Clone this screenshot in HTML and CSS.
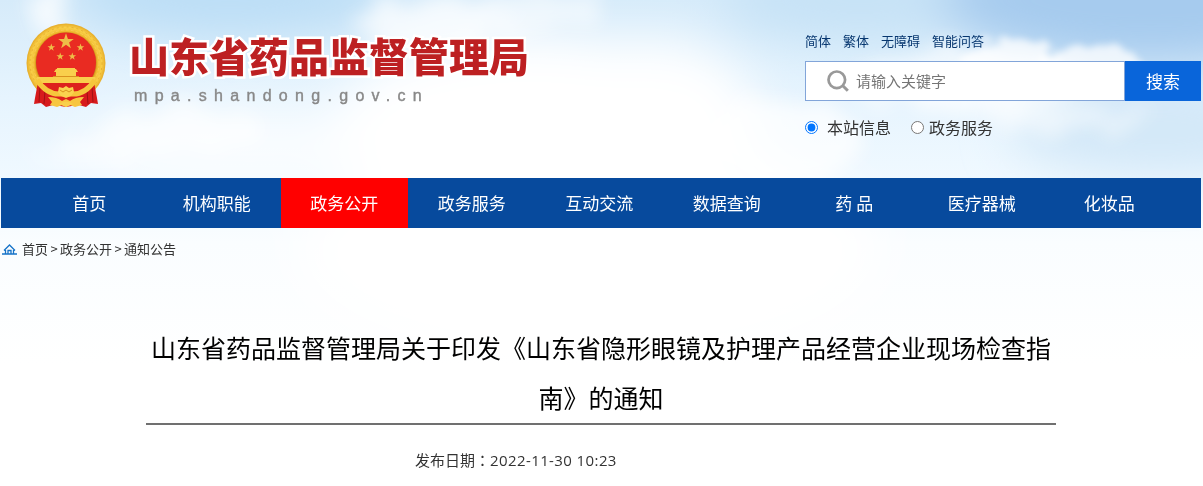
FILE: index.html
```html
<!DOCTYPE html>
<html lang="zh-CN">
<head>
    <meta charset="utf-8">
    <title>山东省药品监督管理局</title>
    <link rel="stylesheet" href="styles.css">
</head>
<body>
    <svg class="sky" width="1203" height="486" viewBox="0 0 1203 486" aria-hidden="true">
        <defs>
            <linearGradient id="base" x1="0" y1="0" x2="0" y2="1">
                <stop offset="0" stop-color="#d6ebfa" />
                <stop offset=".2" stop-color="#e6f4fe" />
                <stop offset=".37" stop-color="#f0f9ff" />
                <stop offset=".5" stop-color="#fafdff" />
                <stop offset=".75" stop-color="#ffffff" />
            </linearGradient>
            <filter id="soft" x="-50%" y="-50%" width="200%" height="200%">
                <feGaussianBlur stdDeviation="24" />
            </filter>
            <filter id="cloud" x="-30%" y="-60%" width="160%" height="220%">
                <feTurbulence type="fractalNoise" baseFrequency=".03 .045" numOctaves="5" seed="7" result="n" />
                <feDisplacementMap in="SourceGraphic" in2="n" scale="50" xChannelSelector="R" yChannelSelector="G" />
                <feGaussianBlur stdDeviation="9" />
            </filter>
            <filter id="edge" x="-30%" y="-60%" width="160%" height="220%">
                <feTurbulence type="fractalNoise" baseFrequency=".05" numOctaves="4" seed="3" result="n" />
                <feDisplacementMap in="SourceGraphic" in2="n" scale="24" xChannelSelector="R" yChannelSelector="G" />
                <feGaussianBlur stdDeviation="3.5" />
            </filter>
        </defs>
        <rect width="1203" height="486" fill="url(#base)" />
        <g filter="url(#soft)">
            <ellipse cx="230" cy="-5" rx="160" ry="42" fill="#bcdef6" />
            <ellipse cx="860" cy="0" rx="140" ry="40" fill="#c6e2f6" />
            <ellipse cx="1150" cy="0" rx="210" ry="65" fill="#a6cbee" />
            <ellipse cx="1160" cy="130" rx="150" ry="45" fill="#d3e8f8" />
            <ellipse cx="530" cy="130" rx="200" ry="95" fill="#fff" />
            <ellipse cx="650" cy="130" rx="110" ry="90" fill="#fff" />
            <ellipse cx="590" cy="250" rx="290" ry="110" fill="#fff" />
            <ellipse cx="250" cy="150" rx="170" ry="40" fill="#fff" opacity=".7" />
        </g>
        <g filter="url(#cloud)" fill="#fff">
            <ellipse cx="50" cy="8" rx="20" ry="26" opacity=".75" />
            <ellipse cx="430" cy="26" rx="70" ry="26" opacity=".7" />
            <ellipse cx="540" cy="10" rx="70" ry="22" opacity=".5" />
            <ellipse cx="180" cy="130" rx="80" ry="22" opacity=".6" />
            <ellipse cx="90" cy="152" rx="60" ry="14" opacity=".5" />
            <ellipse cx="970" cy="82" rx="110" ry="30" opacity=".7" />
            <ellipse cx="780" cy="140" rx="80" ry="45" opacity=".7" />
            <ellipse cx="1060" cy="118" rx="90" ry="12" opacity=".5" />
        </g>
        <g filter="url(#edge)" fill="#fff">
            <ellipse cx="1010" cy="62" rx="50" ry="24" opacity=".75" />
            <ellipse cx="1088" cy="66" rx="52" ry="20" opacity=".75" />
        </g>
    </svg>

    <div class="page">
        <div class="header">
            <div class="logo">
                <svg class="emblem" width="82" height="88" viewBox="0 0 82 88" aria-hidden="true">
                    <defs>
                        <radialGradient id="gold">
                            <stop offset=".74" stop-color="#bd7d12" />
                            <stop offset=".8" stop-color="#f0b92e" />
                            <stop offset=".9" stop-color="#f9cf48" />
                            <stop offset="1" stop-color="#e5aa26" />
                        </radialGradient>
                        <polygon id="star" points="0,-10 2.35,-3.2 9.5,-3.1 3.8,1.2 5.9,8.1 0,4 -5.9,8.1 -3.8,1.2 -9.5,-3.1 -2.35,-3.2" />
                    </defs>
                    <circle cx="41" cy="42" r="39.5" fill="url(#gold)" />
                    <circle cx="41" cy="42" r="36" fill="none" stroke="#d99a20" stroke-dasharray="2 3" opacity=".5" />
                    <circle cx="41" cy="42" r="33" fill="none" stroke="#fde07a" stroke-dasharray="3 2" opacity=".4" />
                    <circle cx="41" cy="41.500" r="30" fill="#e92b22" />
                    <g fill="#eebd48">
                        <use href="#star" transform="translate(41 20.5) scale(.82)" />
                        <use href="#star" transform="translate(26.3 26.5) scale(.4)" />
                        <use href="#star" transform="translate(55.5 26.5) scale(.4)" />
                        <use href="#star" transform="translate(35.2 35.5) scale(.4)" />
                        <use href="#star" transform="translate(47.3 35.5) scale(.4)" />
                    </g>
                    <path d="M31 48h1v-1h18v1h1l2 3h-2v4H31v-4h-2zM28 55h26v1h16v6H12v-6h16z" fill="#f9cf4c" />
                    <path d="M28 55.500h26" stroke="#d9921f" />
                    <path d="M13 62h56l-6 20-22 4-22-4z" fill="#dd201d" />
                    <path d="M13 61l-3 16-1 6 7-1 5 4 7-2-1-10zM69 61l3 16 1 6-7-1-5 4-7-2 1-10z" fill="#d71a1c" />
                    <path d="M15 66l-1 15M20 70l-1 13M67 66l1 15M62 70l1 13" stroke="#a01012" />
                    <path d="M12 59Q24 77 41 72Q58 77 70 59" fill="none" stroke="#f6c63c" stroke-width="5" />
                    <path d="M34 66l4 1 3-2 3 2 4-1 1 5-3 4-5 2-5-2-3-4z" fill="#fad24e" />
                    <path d="M35 69l3 2 3-2 3 2 3-2" fill="none" stroke="#d9921f" />
                    <path d="M23 76q9 0 14 4l4-2 4 2q5-4 14-4l-4 5 2 3-7 2-5-2-4 2-4-2-5 2-7-2 2-3z" fill="#f7c640" />
                    <path d="M34 83q7-5 14 0l-7 3z" fill="#f9d04c" />
                </svg>
                <div class="logo-text">
                    <div class="site-name">山东省药品监督管理局</div>
                    <div class="site-url">mpa.shandong.gov.cn</div>
                </div>
            </div>

            <div class="tools">
                <div class="links">
                    <a href="#">简体</a>
                    <a href="#">繁体</a>
                    <a href="#">无障碍</a>
                    <a href="#">智能问答</a>
                </div>
                <form class="search" action="#">
                    <label class="search-box">
                        <svg width="22" height="22" viewBox="0 0 22 22" aria-hidden="true">
                            <circle cx="9.800" cy="9.800" r="8.300" fill="none" stroke="#999" stroke-width="2.700" />
                            <path d="M15.800 15.800l5 5" stroke="#999" stroke-width="3" />
                        </svg>
                        <input type="text" class="keyword" placeholder="请输入关键字">
                    </label>
                    <button type="button" class="search-btn">搜索</button>
                </form>
                <div class="scope">
                    <label class="scope-site"><input type="radio" name="scope" checked><span>本站信息</span></label>
                    <label class="scope-gov"><input type="radio" name="scope"><span>政务服务</span></label>
                </div>
            </div>
        </div>

        <div class="nav">
            <a href="#">首页</a>
            <a href="#">机构职能</a>
            <a href="#" class="on">政务公开</a>
            <a href="#">政务服务</a>
            <a href="#">互动交流</a>
            <a href="#">数据查询</a>
            <a href="#">药 品</a>
            <a href="#">医疗器械</a>
            <a href="#">化妆品</a>
        </div>

        <div class="crumb">
            <svg width="15" height="11" viewBox="0 0 15 11" aria-hidden="true">
                <path d="M2 6.500L7.500 1L13 6.500M3.500 6v4M11.500 6v4M0 10h15M6 10V6.500h3V10" fill="none" stroke="#1673c8" stroke-width="1.300" />
            </svg>
            <a href="#">首页</a><span>&gt;</span><a href="#">政务公开</a><span>&gt;</span><a href="#">通知公告</a>
        </div>

        <div class="article">
            <h1>山东省药品监督管理局关于印发《山东省隐形眼镜及护理产品经营企业现场检查指南》的通知</h1>
            <p class="date">发布日期<span class="colon" lang="zh-TW">：</span><span class="time">2022-11-30 10:23</span></p>
        </div>
    </div>
</body>
</html>
```
FILE: styles.css
```css
* {
    box-sizing: border-box;
}

body {
    margin: 0;
    height: 486px;
    overflow: hidden;
    background: #fff;
    color: #333;
    font-family: "Microsoft YaHei", "Noto Sans CJK SC", sans-serif;
}

a {
    color: inherit;
    text-decoration: none;
}

.sky {
    position: absolute;
    top: 0;
    left: 0;
    z-index: -1;
}

.page {
    width: 1200px;
    margin-left: 1px;
}

/* header */
.header {
    display: flex;
    justify-content: space-between;
    height: 178px;
}

.logo {
    display: flex;
    padding: 21px 0 0 24px;
}

.logo-text {
    padding: 6px 0 0 22px;
}

.site-name {
    height: 58px;
    line-height: 56px;
    font-size: 40px;
    font-weight: 900;
    color: #bd2022;
    white-space: nowrap;
    paint-order: stroke fill;
    -webkit-text-stroke: 5px #fff;
}

.site-url {
    padding-left: 5px;
    line-height: 22px;
    font-family: "Liberation Sans", Arial, sans-serif;
    font-size: 16px;
    letter-spacing: 7.3px;
    color: #888;
    -webkit-text-stroke: .4px #888;
}

.tools {
    width: 396px;
    padding-top: 31px;
}

.links {
    display: flex;
    gap: 12px;
    height: 30px;
    line-height: 20px;
    font-size: 13px;
    color: #06366f;
}

.search {
    display: flex;
    height: 40px;
}

.search-box {
    display: flex;
    align-items: center;
    width: 320px;
    padding-left: 21px;
    border: 1px solid #82a5d9;
    background: #fff;
}

.keyword {
    width: 250px;
    padding: 0 0 2px 7px;
    border: 0;
    outline: 0;
    background: none;
    font: 15px "Microsoft YaHei", "Noto Sans CJK SC", sans-serif;
}

.keyword::placeholder {
    color: #757575;
}

.search-btn {
    width: 76px;
    padding: 0 0 2px;
    border: 0;
    background: #0965da;
    color: #fff;
    font: 17px "Microsoft YaHei", "Noto Sans CJK SC", sans-serif;
}

.scope {
    display: flex;
    gap: 20px;
    padding-top: 14px;
    line-height: 24px;
    font-size: 16px;
}

.scope label {
    display: flex;
    align-items: center;
}

.scope input {
    width: 13px;
    height: 13px;
    margin: 1px 9px 0 0;
}

.scope .scope-gov input {
    margin-right: 5px;
}

/* nav */
.nav {
    display: flex;
    height: 50px;
    padding-left: 24.5px;
    background: #074a9d;
}

.nav a {
    width: 127.5px;
    line-height: 50px;
    text-align: center;
    font-size: 17px;
    color: #fff;
}

.nav .on {
    background: #f00;
}

.crumb {
    display: flex;
    align-items: center;
    height: 40px;
    padding-left: 1px;
    font-size: 13px;
}

.crumb svg {
    margin: 2px 5px 0 0;
}

.crumb span {
    width: 12px;
    text-align: center;
}

/* article */
.article {
    width: 910px;
    margin: 0 auto;
    padding-top: 54px;
}

.article h1 {
    height: 103px;
    margin: 0;
    border-bottom: 2px solid #707070;
    line-height: 50px;
    text-align: center;
    font-size: 25px;
    font-weight: 400;
    color: #000;
}

.date {
    margin: 23px 0 0 269px;
    line-height: 24px;
    font-size: 15px;
}

.date .colon {
    font-family: "Noto Sans CJK TC", sans-serif;
}

.date .time {
    font-family: "Open Sans", sans-serif;
    letter-spacing: .4px;
}
```
